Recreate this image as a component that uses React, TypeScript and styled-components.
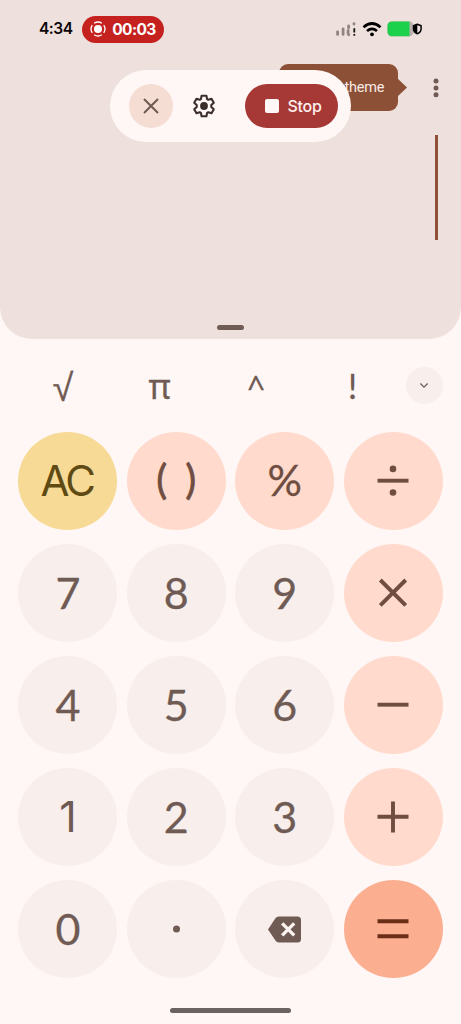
import React from "react";
import styled, { createGlobalStyle } from "styled-components";

const Global = createGlobalStyle`
  * { box-sizing: border-box; }
  body { margin: 0; background: #fff7f5; }
  button { border: 0; padding: 0; margin: 0; font: inherit; color: inherit; background: none; }
  svg { display: block; overflow: visible; }
`;

const Screen = styled.div`
  position: relative;
  width: 461px;
  height: 1024px;
  overflow: hidden;
  display: flex;
  flex-direction: column;
  background: #fff7f5;
  color: #6f5b54;
  font-family: Inter, "Liberation Sans", sans-serif;
`;

const Display = styled.section`
  height: 338.7px;
  flex: none;
  display: flex;
  flex-direction: column;
  background: #eee0dc;
  border-radius: 0 0 32px 32px;
`;

const StatusBar = styled.header`
  height: 58px;
  padding: 0 39px 0 39px;
  display: flex;
  align-items: center;
`;

const Clock = styled.span`
  width: 43.2px;
  margin-bottom: 2px;
  font-size: 15.5px;
  font-weight: 600;
  letter-spacing: -0.5px;
  color: #0c0606;
`;

const Recording = styled.div`
  width: 81.5px;
  height: 27px;
  border-radius: 14px;
  padding-left: 8px;
  display: flex;
  align-items: center;
  gap: 6px;
  background: #c5211f;
  color: #fff;
  font-size: 15.5px;
  font-weight: 700;
  letter-spacing: -0.6px;
`;

const StatusIcons = styled.div`
  margin-left: auto;
  margin-bottom: 1px;
  display: flex;
  align-items: center;
`;

const TopRow = styled.div`
  height: 60px;
  display: flex;
  justify-content: flex-end;
  padding: 6px 21.8px 0 0;
`;

const ThemeTip = styled.div`
  position: relative;
  width: 119px;
  height: 47px;
  margin-right: 35.4px;
  padding: 0 13.5px 1px 0;
  display: flex;
  align-items: center;
  justify-content: flex-end;
  border-radius: 9px;
  background: #8b5036;
  color: #fbe9e3;
  font-family: Roboto, sans-serif;
  font-size: 14.5px;
  letter-spacing: -0.2px;
`;

const TipArrow = styled.svg`
  position: absolute;
  left: 118px;
  top: 14px;
`;

const MoreButton = styled.button`
  width: 6px;
  height: 47px;
  display: flex;
  align-items: center;
`;

const Entry = styled.div`
  flex: 1;
  display: flex;
  justify-content: flex-end;
  padding: 17px 23.5px 0 0;
`;

const Caret = styled.span`
  width: 2.4px;
  height: 105px;
  background: #8f5037;
`;

const Handle = styled.span`
  align-self: center;
  width: 27px;
  height: 5px;
  margin-bottom: 8.7px;
  border-radius: 3px;
  background: #705c55;
`;

const RecorderPanel = styled.div`
  position: absolute;
  left: 110px;
  top: 70px;
  width: 241px;
  height: 71.5px;
  padding: 0 13.5px 0 18.5px;
  border-radius: 36px;
  background: #fff7f5;
  display: flex;
  align-items: center;
`;

const CloseButton = styled.button`
  width: 44.5px;
  height: 44.5px;
  border-radius: 50%;
  background: #f5ddd4;
  display: grid;
  place-items: center;
`;

const SettingsButton = styled.button`
  margin-left: 19.4px;
`;

const StopButton = styled.button`
  margin-left: auto;
  width: 93px;
  height: 44.5px;
  border-radius: 23px;
  padding-left: 20px;
  display: flex;
  align-items: center;
  gap: 9px;
  background: #a63836;
  color: #fff1ee;
  font-size: 16px;
  font-weight: 500;
  letter-spacing: -0.3px;
`;

const StopSquare = styled.span`
  width: 14px;
  height: 14px;
  border-radius: 2px;
  background: #fff7f5;
`;

const FunctionRow = styled.nav`
  height: 93.7px;
  flex: none;
  padding: 0 18.5px 0 14.8px;
  display: grid;
  grid-template-columns: repeat(4, 96.5px) 1fr;
  align-items: center;
`;

const FunctionKey = styled.button<{ $size?: number; $lift?: number; $font?: string }>`
  height: 60px;
  line-height: 60px;
  text-align: center;
  font-family: ${(p) => p.$font ?? "Inter"}, sans-serif;
  font-size: ${(p) => p.$size ?? 33}px;
  padding-bottom: ${(p) => p.$lift ?? 0}px;
  -webkit-text-stroke: 0.3px currentColor;
`;

const Expand = styled.button`
  justify-self: end;
  width: 37px;
  height: 37px;
  border-radius: 50%;
  background: #f8eeec;
  display: grid;
  place-items: center;
`;

const Keypad = styled.main`
  padding: 0 18.4px;
  display: grid;
  grid-template-columns: repeat(4, 99px);
  grid-auto-rows: 98px;
  column-gap: 9.4px;
  row-gap: 14px;
`;

type Tone = "digit" | "operator" | "clear" | "equals";
const fills: Record<Tone, [string, string]> = {
  digit: ["#f8eeec", "#6f5b54"],
  operator: ["#ffdacd", "#6f4d41"],
  clear: ["#f6da96", "#5e4a12"],
  equals: ["#fcae90", "#6a2e17"],
};

const Key = styled.button<{
  $tone: Tone;
  $size?: number;
  $track?: number;
  $font?: string;
  $lift?: number;
  $gap?: number;
  $stroke?: number;
}>`
  border-radius: 50%;
  display: flex;
  align-items: center;
  justify-content: center;
  background: ${(p) => fills[p.$tone][0]};
  color: ${(p) => fills[p.$tone][1]};
  font-family: ${(p) => p.$font ?? "Lato"}, sans-serif;
  font-size: ${(p) => p.$size ?? 43}px;
  line-height: 1;
  letter-spacing: ${(p) => p.$track ?? 0}px;
  word-spacing: ${(p) => p.$gap ?? 0}px;
  padding-bottom: ${(p) => p.$lift ?? 2}px;
  -webkit-text-stroke: ${(p) => p.$stroke ?? 0.3}px currentColor;
`;

const ClearKey = styled(Key)`
  padding-right: 2px;
`;

const NavBar = styled.span`
  align-self: center;
  width: 121px;
  height: 4.4px;
  margin-top: 30px;
  border-radius: 3px;
  background: #6b6361;
`;

const operatorPaths: Record<string, string> = {
  multiply: "M3.3 2.5 28.7 27.9M28.7 2.5 3.3 27.9",
  minus: "M.5 15.2h31",
  plus: "M.5 15.2h31M16 0v31",
  divide: "M.5 15.2h31",
  equals: "M.5 7.7h31M.5 22.7h31",
};

function Operator({ name }: { name: string }) {
  return (
    <svg width="32" height="32" viewBox="0 -.5 32 32" fill="none" stroke="currentColor" strokeWidth="3.9">
      <path d={operatorPaths[name]} />
      {name === "divide" && (
        <g fill="currentColor" stroke="none">
          <circle cx="16" cy="3.4" r="3.3" />
          <circle cx="16" cy="27" r="3.3" />
        </g>
      )}
    </svg>
  );
}

function Backspace() {
  return (
    <svg width="33" height="26" viewBox="0 -.4 33 26">
      <path d="M10.8 0H29.5a3.5 3.5 0 0 1 3.5 3.5v19a3.5 3.5 0 0 1-3.5 3.5H10.8a4 4 0 0 1-3.2-1.6L0 13 7.6 1.6A4 4 0 0 1 10.8 0Z" fill="#6f5b54" />
      <path d="m14.2 7 12 12m0-12-12 12" stroke="#fbf3f0" strokeWidth="3.4" />
    </svg>
  );
}

function Gear() {
  return (
    <svg width="24" height="24" viewBox="0 0 24 24" fill="none" stroke="#3b2d29" strokeWidth="2.1" strokeLinejoin="round">
      <path d="M9.6 1.7h4.8l.7 3.4 1.2.7 3.2-1.1 2.3 4-2.5 2.3v2l2.5 2.3-2.3 4-3.2-1.1-1.2.7-.7 3.4H9.6l-.7-3.4-1.2-.7-3.2 1.1-2.3-4L4.7 13v-2L2.2 8.7l2.3-4 3.2 1.1 1.2-.7Z" />
      <circle cx="12" cy="12" r="3.9" fill="#3b2d29" stroke="none" />
    </svg>
  );
}

function RecordIcon() {
  return (
    <svg width="16" height="16" viewBox="0 0 16 16" fill="none" stroke="#fff" strokeWidth="1.3">
      <circle cx="8" cy="8" r="4" fill="#fff" stroke="none" />
      <circle cx="8" cy="8" r="6.9" pathLength="40" strokeDasharray="7.5 2.5" strokeDashoffset="-1.25" transform="rotate(45 8 8)" />
    </svg>
  );
}

function StatusGlyphs() {
  return (
    <svg width="86" height="16" viewBox="0 0 86 16" fill="none">
      <g stroke="#8f8481" strokeWidth="2.8" strokeLinecap="round">
        <path d="M1.6 10.8v2.6M7.1 7.8v5.6M12.6 5v1.8M12.2 9.5q-.7 2.3.5 4.4M18 2.7v.4" />
      </g>
      <path d="M18.3 7.2v4.2m0 1.7v1.7" stroke="#111" strokeWidth="1.8" />
      <g stroke="#000" strokeWidth="2.7">
        <path d="M27.5 6.2q8.5-7.4 17 0M31 10q5-4.2 10 0" />
      </g>
      <circle cx="36" cy="13.3" r="1.9" fill="#000" />
      <rect x="51.5" y=".5" width="26" height="14.8" rx="4.2" fill="#b9afac" />
      <path d="M55.7.5H73.5v14.8H55.7a4.2 4.2 0 0 1-4.2-4.2V4.7A4.2 4.2 0 0 1 55.7.5Z" fill="#1bd04a" />
      <path d="m81.3 3.2 3.8 1.5v3q0 3.5-3.8 5-3.8-1.5-3.8-5v-3Z" fill="#eee0dc" stroke="#000" strokeWidth="1.5" strokeLinejoin="round" />
      <path d="M81.3 3.2v9.5q-3.8-1.5-3.8-5v-3Z" fill="#000" />
    </svg>
  );
}

export default function App() {
  return (
    <Screen>
      <Global />
      <Display>
        <StatusBar>
          <Clock>4:34</Clock>
          <Recording>
            <RecordIcon />
            00:03
          </Recording>
          <StatusIcons>
            <StatusGlyphs />
          </StatusIcons>
        </StatusBar>
        <TopRow>
          <ThemeTip>
            theme
            <TipArrow width="11" height="19" viewBox="0 0 11 19">
              <path d="M0 0 10 9.5 0 19Z" fill="#8b5036" />
            </TipArrow>
          </ThemeTip>
          <MoreButton aria-label="More options">
            <svg width="6" height="20" viewBox="0 0 6 20" fill="#6f5b54">
              <circle cx="3" cy="3" r="2.5" />
              <circle cx="3" cy="9.9" r="2.5" />
              <circle cx="3" cy="16.7" r="2.5" />
            </svg>
          </MoreButton>
        </TopRow>
        <Entry>
          <Caret />
        </Entry>
        <Handle />
      </Display>

      <FunctionRow>
        <FunctionKey $font="'Noto Sans'" $size={38}>√</FunctionKey>
        <FunctionKey $font="'Noto Sans'" $size={34} $lift={3}>π</FunctionKey>
        <FunctionKey $font="'Noto Sans'" $size={31} $lift={3}>^</FunctionKey>
        <FunctionKey $font="Lato" $size={34} $lift={5}>!</FunctionKey>
        <Expand aria-label="More functions">
          <svg width="8" height="5" viewBox="0 0 8 5" fill="none" stroke="#6f5b54" strokeWidth="1.2">
            <path d="m.4.5 3.6 3.6L7.6.5" />
          </svg>
        </Expand>
      </FunctionRow>

      <Keypad>
        <ClearKey $tone="clear" $size={42} $track={-2.6} $font="Inter" $stroke={0} $lift={0}>AC</ClearKey>
        <Key $tone="operator" $size={41} $gap={7.5} $lift={5} $stroke={0.7}>( )</Key>
        <Key $tone="operator" $lift={3}>%</Key>
        <Key $tone="operator" $lift={0} aria-label="divide"><Operator name="divide" /></Key>
        <Key $tone="digit">7</Key>
        <Key $tone="digit">8</Key>
        <Key $tone="digit">9</Key>
        <Key $tone="operator" $lift={0} aria-label="multiply"><Operator name="multiply" /></Key>
        <Key $tone="digit">4</Key>
        <Key $tone="digit">5</Key>
        <Key $tone="digit">6</Key>
        <Key $tone="operator" $lift={0} aria-label="minus"><Operator name="minus" /></Key>
        <Key $tone="digit" $font="Inter" $stroke={0}>1</Key>
        <Key $tone="digit">2</Key>
        <Key $tone="digit">3</Key>
        <Key $tone="operator" $lift={0} aria-label="plus"><Operator name="plus" /></Key>
        <Key $tone="digit">0</Key>
        <Key $tone="digit" $lift={0} aria-label="point">
          <svg width="7" height="7" viewBox="0 0 7 7"><circle cx="3.5" cy="3" r="3.5" fill="#6f5b54" /></svg>
        </Key>
        <Key $tone="digit" $lift={0} aria-label="backspace"><Backspace /></Key>
        <Key $tone="equals" $lift={0} aria-label="equals"><Operator name="equals" /></Key>
      </Keypad>
      <NavBar />

      <RecorderPanel>
        <CloseButton aria-label="Close">
          <svg width="16" height="16" viewBox="0 0 16 16" stroke="#6f5b54" strokeWidth="2">
            <path d="m1 1 14 14M15 1 1 15" />
          </svg>
        </CloseButton>
        <SettingsButton aria-label="Settings">
          <Gear />
        </SettingsButton>
        <StopButton>
          <StopSquare />
          Stop
        </StopButton>
      </RecorderPanel>
    </Screen>
  );
}
